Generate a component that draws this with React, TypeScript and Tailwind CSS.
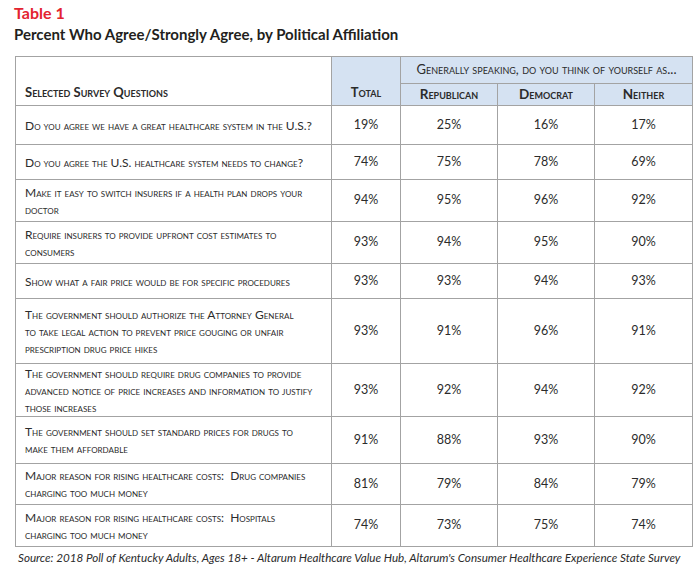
const rows: { q: string[]; v: string[]; h: string }[] = [
  { q: ["Do you agree we have a great healthcare system in the U.S.?"], v: ["19%", "25%", "16%", "17%"], h: "h-[39px]" },
  { q: ["Do you agree the U.S. healthcare system needs to change?"], v: ["74%", "75%", "78%", "69%"], h: "h-[35px]" },
  { q: ["Make it easy to switch insurers if a health plan drops your", "doctor"], v: ["94%", "95%", "96%", "92%"], h: "h-[42px]" },
  { q: ["Require insurers to provide upfront cost estimates to", "consumers"], v: ["93%", "94%", "95%", "90%"], h: "h-[42px]" },
  { q: ["Show what a fair price would be for specific procedures"], v: ["93%", "93%", "94%", "93%"], h: "h-[35px]" },
  {
    q: [
      "The government should authorize the Attorney General",
      "to take legal action to prevent price gouging or unfair",
      "prescription drug price hikes",
    ],
    v: ["93%", "91%", "96%", "91%"],
    h: "h-[65px]",
  },
  {
    q: [
      "The government should require drug companies to provide",
      "advanced notice of price increases and information to justify",
      "those increases",
    ],
    v: ["93%", "92%", "94%", "92%"],
    h: "h-[53px]",
  },
  { q: ["The government should set standard prices for drugs to", "make them affordable"], v: ["91%", "88%", "93%", "90%"], h: "h-[47px]" },
  { q: ["Major reason for rising healthcare costs:\u00a0 Drug companies", "charging too much money"], v: ["81%", "79%", "84%", "79%"], h: "h-[41px]" },
  { q: ["Major reason for rising healthcare costs:\u00a0 Hospitals", "charging too much money"], v: ["74%", "73%", "75%", "74%"], h: "h-[42px]" },
];

const cell = "border border-[#a3a3a3]";

export default function App() {
  return (
    <div className="h-[571px] w-[700px] bg-white font-['Lato','Liberation_Sans',sans-serif] text-[#2b2b2b]">
      <div className="px-[14px] pt-[2px]">
        <h2 className="text-[16px] font-bold leading-[21px] text-[#e32330]">Table 1</h2>
        <h1 className="mt-[1px] text-[15px] font-bold leading-[20px] text-[#231f20]">
          Percent Who Agree/Strongly Agree, by Political Affiliation
        </h1>
      </div>

      <table className="ml-[15px] mt-[12px] w-[677px] table-fixed border-collapse [font-variant:small-caps]">
        <colgroup>
          <col className="w-[316px]" />
          <col className="w-[69px]" />
          <col className="w-[97px]" />
          <col className="w-[97px]" />
          <col className="w-[98px]" />
        </colgroup>
        <thead>
          <tr className="h-[27px]">
            <th rowSpan={2} className={`${cell} bg-white px-[9px] pb-[3px] text-left align-bottom text-[13px] font-bold`}>
              Selected Survey Questions
            </th>
            <th rowSpan={2} className={`${cell} bg-[#d5e2f2] pb-[3px] align-bottom text-[13px] font-bold`}>
              Total
            </th>
            <th colSpan={3} className={`${cell} bg-[#d5e2f2] text-[13px] font-normal`}>
              Generally speaking, do you think of yourself as...
            </th>
          </tr>
          <tr className="h-[22px]">
            <th className={`${cell} bg-[#d5e2f2] text-[13.5px] font-bold`}>Republican</th>
            <th className={`${cell} bg-[#d5e2f2] text-[13.5px] font-bold`}>Democrat</th>
            <th className={`${cell} bg-[#d5e2f2] text-[13.5px] font-bold`}>Neither</th>
          </tr>
        </thead>
        <tbody>
          {rows.map((r) => (
            <tr key={r.q[0]} className={r.h}>
              <td className={`${cell} pl-[9px] pr-[2px] text-left text-[12px] leading-[17px] whitespace-nowrap`}>
                {r.q.map((line) => (
                  <div key={line}>{line}</div>
                ))}
              </td>
              {r.v.map((v, i) => (
                <td key={i} className={`${cell} text-center text-[12.5px] [font-variant:normal]`}>
                  {v}
                </td>
              ))}
            </tr>
          ))}
        </tbody>
      </table>

      <p className="mt-[2px] pl-[18px] text-[11.65px] italic text-[#2b2b2b]">
        Source: 2018 Poll of Kentucky Adults, Ages 18+ - Altarum Healthcare Value Hub, Altarum&apos;s Consumer Healthcare
        Experience State Survey
      </p>
    </div>
  );
}
